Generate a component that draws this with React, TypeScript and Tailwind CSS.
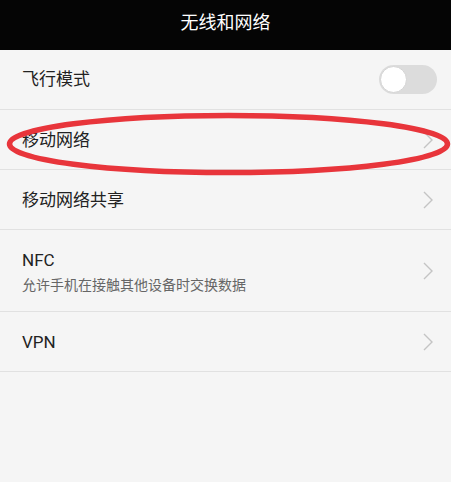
const font = { fontFamily: '"Roboto", "Noto Sans CJK SC", sans-serif' };

const Chevron = () => (
  <svg width="12" height="20" viewBox="0 0 12 20" className="shrink-0">
    <path d="M2 2 L10 10 L2 18" fill="none" stroke="#c4c4c4" strokeWidth="1.4" />
  </svg>
);

const Row = ({ title, sub, tall }: { title: string; sub?: string; tall?: boolean }) => (
  <div
    className={`flex items-center justify-between pl-[22px] pr-[17px] border-b border-[#e1e1e1] ${
      tall ? "h-[82px]" : "h-[60px]"
    }`}
  >
    <div className={`flex flex-col ${tall ? "pt-[3px]" : "pt-[1px]"}`}>
      <span className="text-[17px] leading-[22px] text-[#222222]">{title}</span>
      {sub && <span className="text-[14px] leading-[20px] mt-[4px] text-[#666666]">{sub}</span>}
    </div>
    <Chevron />
  </div>
);

export default function App() {
  return (
    <div className="w-[451px] h-[482px] bg-[#f5f5f5] relative overflow-hidden" style={font}>
      <div className="h-[50px] bg-[#050505] flex items-center justify-center pb-[6px]">
        <span className="text-white text-[18px]">无线和网络</span>
      </div>
      <div className="flex items-center justify-between pl-[22px] pr-[14px] h-[60px] border-b border-[#e1e1e1]">
        <span className="text-[17px] pt-[1px] text-[#222222]">飞行模式</span>
        <div className="w-[58px] h-[29px] rounded-full bg-[#dcdcdc] relative">
          <div className="absolute left-[1px] top-[1px] w-[27px] h-[27px] rounded-full bg-white border border-[#d4d4d4]" />
        </div>
      </div>
      <Row title="移动网络" />
      <Row title="移动网络共享" />
      <Row title="NFC" sub="允许手机在接触其他设备时交换数据" tall />
      <Row title="VPN" />
      <svg className="absolute left-0 top-0 pointer-events-none" width="451" height="482">
        <ellipse cx="228.5" cy="144" rx="219" ry="28.5" fill="none" stroke="#e8353b" strokeWidth="5.5" />
      </svg>
    </div>
  );
}
